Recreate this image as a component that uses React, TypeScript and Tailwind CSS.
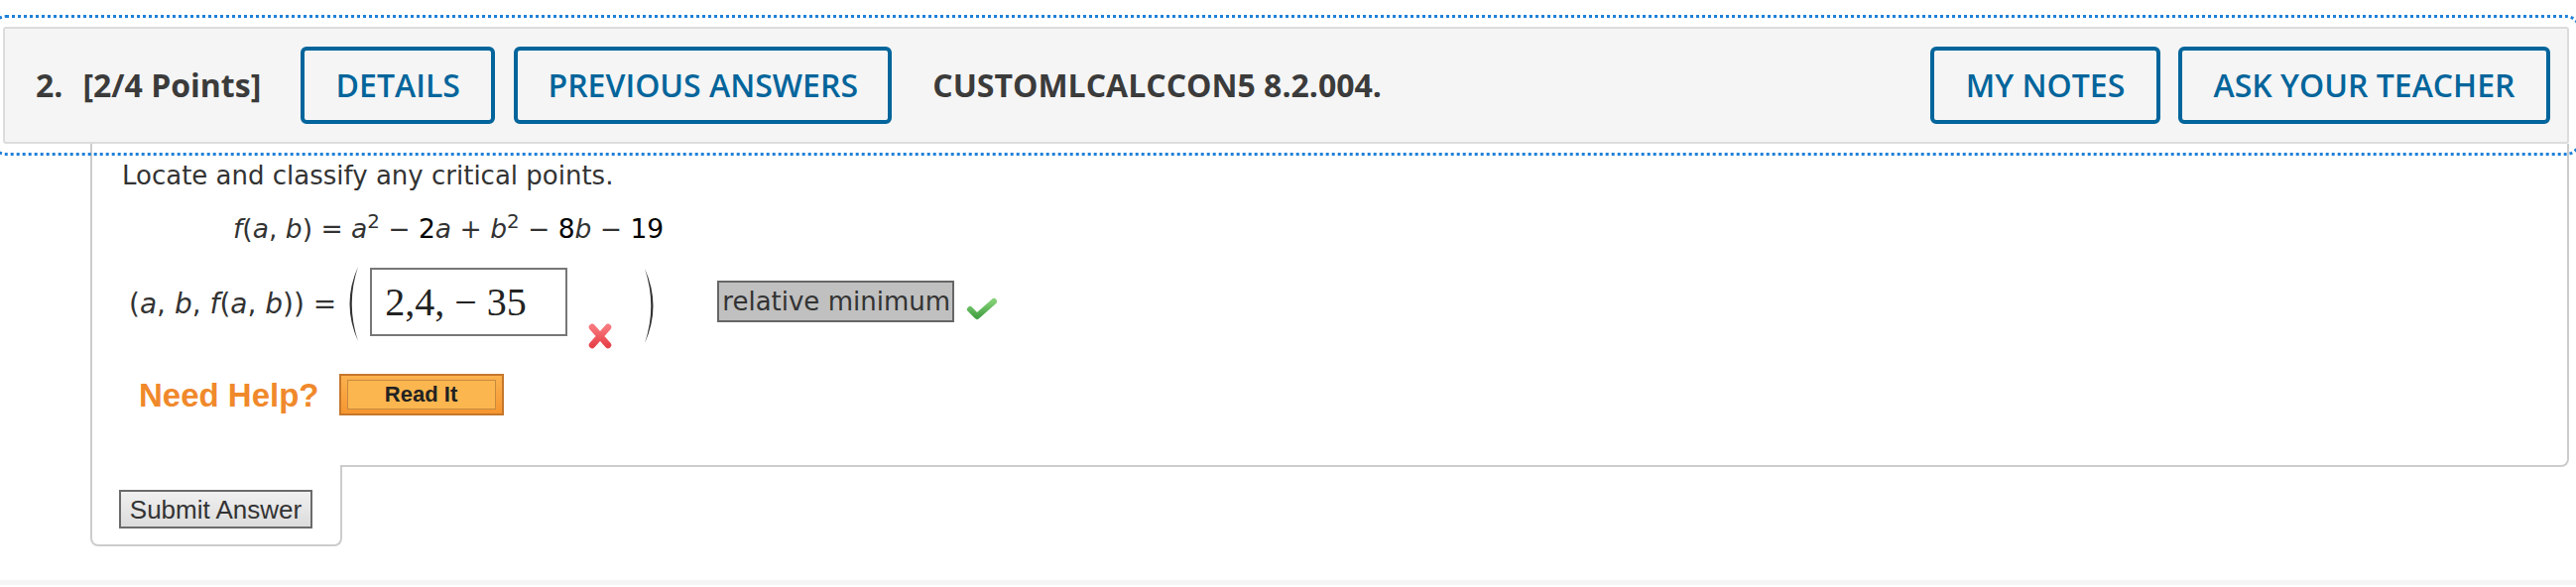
import React from "react";

const blueBtn =
  "flex items-center justify-center h-[78px] border-[4px] border-[#03659b] rounded-[6px] text-[32px] font-semibold text-[#03659b] leading-none";

function Paren({ right }: { right?: boolean }) {
  return (
    <svg width="17" height="77" viewBox="0 0 17 77">
      {right ? (
        <path d="M2 1 Q19 38.5 2 76 Q14.5 38.5 2 1 Z" fill="#333" />
      ) : (
        <path d="M15 1 Q-2 38.5 15 76 Q2.5 38.5 15 1 Z" fill="#333" />
      )}
    </svg>
  );
}

function WrongMark() {
  return (
    <svg width="26" height="28" viewBox="0 0 26 28">
      <defs>
        <linearGradient id="xg" x1="0" y1="0" x2="0" y2="1">
          <stop offset="0" stopColor="#f7777c" />
          <stop offset="1" stopColor="#e8434b" />
        </linearGradient>
      </defs>
      <path d="M5 5 L21 23 M21 5 L5 23" stroke="url(#xg)" strokeWidth="6.5" strokeLinecap="round" />
    </svg>
  );
}

function RightMark() {
  return (
    <svg width="34" height="27" viewBox="0 0 34 27">
      <defs>
        <linearGradient id="cg" x1="0" y1="0" x2="0" y2="1">
          <stop offset="0" stopColor="#82cf75" />
          <stop offset="1" stopColor="#46a346" />
        </linearGradient>
      </defs>
      <path d="M5 14 L12 21 L29 6" fill="none" stroke="url(#cg)" strokeWidth="6" strokeLinecap="round" strokeLinejoin="round" />
    </svg>
  );
}

export default function App() {
  return (
    <div className="min-h-[592px] bg-white">
      {/* question header */}
      <div className="pt-[27px] pl-[3px] pr-[7px]">
        <div className="flex items-center h-[118px] border-2 border-[#dcdcdc] rounded-[3px] bg-[#f5f5f5] pl-[31px] pr-[17px] outline-[3px] outline-dotted outline-[#1f80d8] outline-offset-[9px] font-['Open_Sans',sans-serif]">
          <span className="text-[32px] font-bold text-[#3b3b3b]">2.</span>
          <span className="ml-[20px] text-[32px] font-bold text-[#3b3b3b]">[2/4 Points]</span>
          <button className={`ml-[40px] w-[196px] ${blueBtn}`}>DETAILS</button>
          <button className={`ml-[19px] w-[381px] ${blueBtn}`}>PREVIOUS ANSWERS</button>
          <span className="ml-[41px] text-[32px] font-bold text-[#3b3b3b]">CUSTOMLCALCCON5 8.2.004.</span>
          <div className="ml-auto flex gap-[18px]">
            <button className={`w-[232px] ${blueBtn}`}>MY NOTES</button>
            <button className={`w-[375px] ${blueBtn}`}>ASK YOUR TEACHER</button>
          </div>
        </div>
      </div>

      {/* question body */}
      <div className="ml-[91px] mr-[7px] border-x-2 border-b-2 border-[#cccccc] rounded-br-[8px] pl-[30px] pt-[14px] pb-[50px] font-['DejaVu_Sans',Verdana,sans-serif] text-[26px] text-[#333]">
        <div className="leading-[36px]">Locate and classify any critical points.</div>
        <div className="ml-[112px] mt-[18px] leading-[36px] text-[26.5px]">
          <i>f</i>(<i>a</i>, <i>b</i>) = <i>a</i>
          <sup>2</sup> − <span className="text-black">2</span>
          <i>a</i> + <i>b</i>
          <sup>2</sup> − <span className="text-black">8</span>
          <i>b</i> − <span className="text-black">19</span>
        </div>

        <div className="flex items-start mt-[17px] ml-[7px] h-[88px]">
          <span className="mt-[23px] leading-[36px] text-[28px]">
            (<i>a</i>, <i>b</i>, <i>f</i>(<i>a</i>, <i>b</i>)) =
          </span>
          <div className="mt-[2px] ml-[7px]">
            <Paren />
          </div>
          <div className="mt-[4px] ml-[10px] w-[199px] h-[69px] border-2 border-[#777] flex items-center pl-[13px] font-['Liberation_Serif',serif] text-[40px] text-[#222]">
            2,4, − 35
          </div>
          <div className="mt-[59px] ml-[20px]">
            <WrongMark />
          </div>
          <div className="mt-[4px] ml-[30px]">
            <Paren right />
          </div>
          <div className="mt-[17px] ml-[58px] w-[239px] h-[42px] border-2 border-[#666] bg-[#c0c0c0] flex items-center pl-[3px] leading-none">
            relative minimum
          </div>
          <div className="mt-[32px] ml-[11px]">
            <RightMark />
          </div>
        </div>

        <div className="flex items-center mt-[23px] ml-[17px] font-['Liberation_Sans',Arial,sans-serif]">
          <span className="text-[33px] font-bold text-[#f0892b] leading-none">Need Help?</span>
          <button className="ml-[20px] w-[166px] h-[42px] border-2 border-[#c5772c] bg-linear-to-b from-[#fbb24f] to-[#f6962f] px-[6px] py-[4px] flex">
            <span className="flex-1 flex items-center justify-center border border-[#c88a3f] bg-[#fbb64f] text-[22px] font-bold text-[#222] leading-none">
              Read It
            </span>
          </button>
        </div>
      </div>

      {/* submit tab */}
      <div className="-mt-[2px] ml-[91px] w-[254px] border-x-2 border-b-2 border-[#cccccc] rounded-b-[8px] bg-white pt-[25px] pb-[16px] pl-[27px]">
        <button className="h-[39px] w-[195px] border-2 border-[#6b6b6b] bg-linear-to-b from-[#f0f0f0] to-[#dcdcdc] text-[26px] leading-none text-[#333] font-['Liberation_Sans',Arial,sans-serif]">
          Submit Answer
        </button>
      </div>

      <div className="mt-[34px] h-[5px] bg-[#f5f5f5]" />
    </div>
  );
}
